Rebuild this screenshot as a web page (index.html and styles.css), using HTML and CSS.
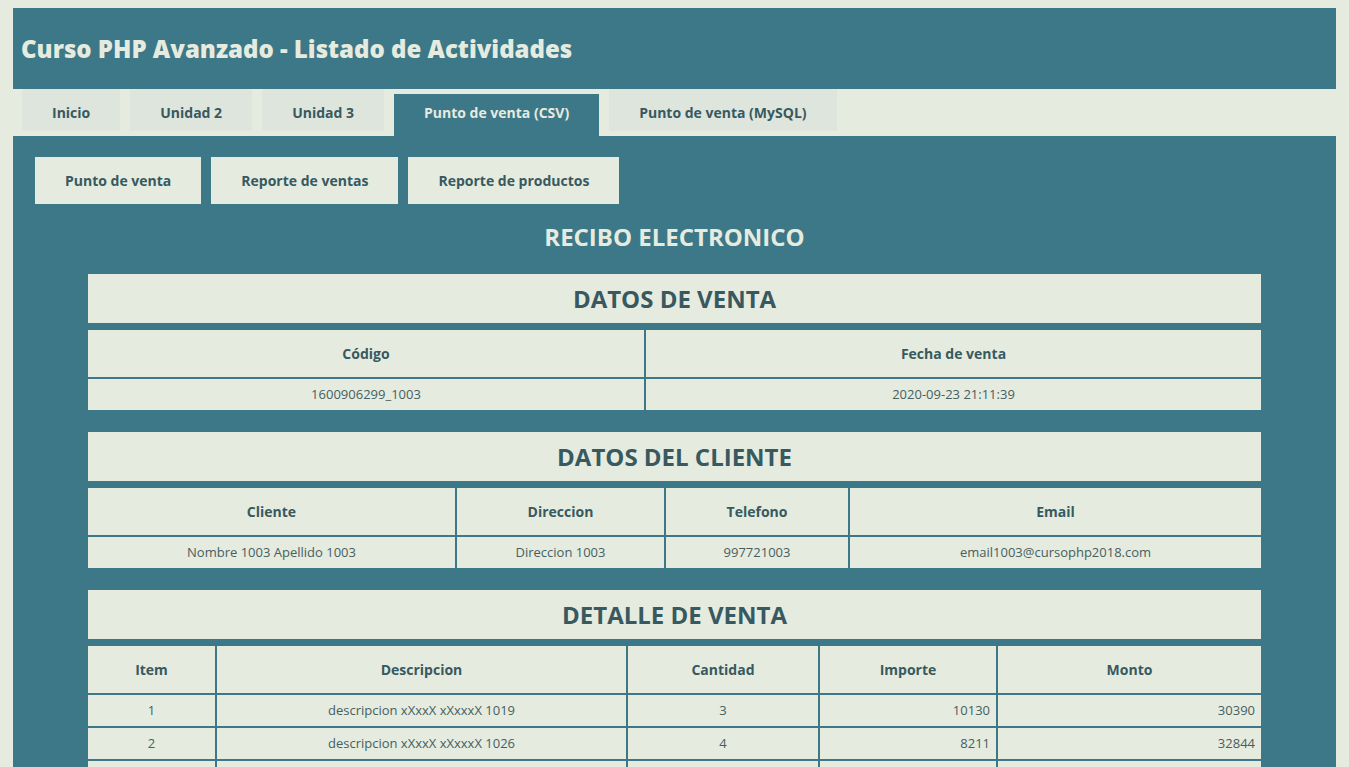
FILE: index.html
```html
<!DOCTYPE html>
<html lang="es">
<head>
    <meta charset="UTF-8">
    <meta name="viewport" content="width=device-width, initial-scale=1.0">
    <title>Curso PHP Avanzado - Recibo electronico</title>
    <link rel="stylesheet" href="styles.css">
</head>
<body>
    <header class="site-header">
        <h1>Curso PHP Avanzado - Listado de Actividades</h1>
    </header>

    <nav class="tabs">
        <a class="tab" href="#">Inicio</a>
        <a class="tab" href="#">Unidad 2</a>
        <a class="tab" href="#">Unidad 3</a>
        <a class="tab active" href="#">Punto de venta (CSV)</a>
        <a class="tab" href="#">Punto de venta (MySQL)</a>
    </nav>

    <main class="content">
        <div class="subnav">
            <a class="subbtn" href="#">Punto de venta</a>
            <a class="subbtn" href="#">Reporte de ventas</a>
            <a class="subbtn" href="#">Reporte de productos</a>
        </div>

        <h2 class="receipt-title">RECIBO ELECTRONICO</h2>

        <section class="block">
            <h3 class="block-title">DATOS DE VENTA</h3>
            <table class="grid">
                <tr>
                    <th class="c-codigo">Código</th>
                    <th>Fecha de venta</th>
                </tr>
                <tr>
                    <td>1600906299_1003</td>
                    <td>2020-09-23 21:11:39</td>
                </tr>
            </table>
        </section>

        <section class="block">
            <h3 class="block-title">DATOS DEL CLIENTE</h3>
            <table class="grid">
                <tr>
                    <th class="c-cliente">Cliente</th>
                    <th class="c-direccion">Direccion</th>
                    <th class="c-telefono">Telefono</th>
                    <th>Email</th>
                </tr>
                <tr>
                    <td>Nombre 1003 Apellido 1003</td>
                    <td>Direccion 1003</td>
                    <td>997721003</td>
                    <td>email1003@cursophp2018.com</td>
                </tr>
            </table>
        </section>

        <section class="block">
            <h3 class="block-title">DETALLE DE VENTA</h3>
            <table class="grid">
                <tr>
                    <th class="c-item">Item</th>
                    <th class="c-desc">Descripcion</th>
                    <th class="c-cant">Cantidad</th>
                    <th class="c-importe">Importe</th>
                    <th>Monto</th>
                </tr>
                <tr>
                    <td>1</td>
                    <td>descripcion xXxxX xXxxxX 1019</td>
                    <td>3</td>
                    <td class="num">10130</td>
                    <td class="num">30390</td>
                </tr>
                <tr>
                    <td>2</td>
                    <td>descripcion xXxxX xXxxxX 1026</td>
                    <td>4</td>
                    <td class="num">8211</td>
                    <td class="num">32844</td>
                </tr>
                <tr>
                    <td>3</td>
                    <td>descripcion xXxxX xXxxxX 1041</td>
                    <td>2</td>
                    <td class="num">5470</td>
                    <td class="num">10940</td>
                </tr>
                <tr>
                    <td colspan="4" class="num total">Total</td>
                    <td class="num">74174</td>
                </tr>
            </table>
        </section>
    </main>
</body>
</html>
```

FILE: styles.css
```css
body {
    margin: 8px 13px;
    background-color: #e6ebdf;
    font-family: "Open Sans", Arial, sans-serif;
    color: #37595f;
}
a {
    text-decoration: none;
    color: inherit;
}
.site-header {
    background-color: #3d7888;
    height: 81px;
    display: flex;
    align-items: center;
    padding: 0 8px;
}
.site-header h1 {
    margin: 0;
    font-size: 24px;
    font-weight: 800;
    color: #e6ebdf;
}
.tabs {
    display: flex;
    align-items: flex-start;
    gap: 10px;
    padding-left: 9px;
    height: 47px;
}
.tab {
    display: block;
    background-color: #dee5dc;
    font-size: 14px;
    font-weight: 700;
    line-height: 17px;
    padding: 15px 30px 10px;
}
.tab.active {
    background-color: #3d7888;
    color: #e6ebdf;
    margin-top: 5px;
    padding: 10px 30px 15px;
}
.content {
    background-color: #3d7888;
    padding: 21px 22px 40px;
}
.subnav {
    display: flex;
    gap: 10px;
}
.subbtn {
    display: block;
    background-color: #e6ebdf;
    font-size: 14px;
    font-weight: 700;
    line-height: 17px;
    padding: 15px 30px;
}
.receipt-title {
    margin: 16px 0 21px;
    text-align: center;
    font-size: 24px;
    line-height: 33px;
    color: #e6ebdf;
}
.block {
    width: 1173px;
    margin: 0 auto 22px;
}
.block-title {
    margin: 0 0 7px;
    background-color: #e6ebdf;
    text-align: center;
    font-size: 24px;
    line-height: 49px;
}
.grid {
    width: 100%;
    border-collapse: collapse;
    border-style: hidden;
    table-layout: fixed;
    background-color: #e6ebdf;
}
.grid th,
.grid td {
    box-sizing: border-box;
    border: 2px solid #3d7888;
    text-align: center;
    line-height: 17px;
}
.grid th {
    font-size: 14px;
    font-weight: 700;
    padding: 15px 6px;
}
.grid td {
    font-size: 13px;
    color: #45605f;
    padding: 7px 6px;
}
.grid td.num {
    text-align: right;
}
.grid td.total {
    font-weight: 700;
}
.c-codigo { width: 557px; }
.c-cliente { width: 368px; }
.c-direccion { width: 209px; }
.c-telefono { width: 184px; }
.c-item { width: 128px; }
.c-desc { width: 411px; }
.c-cant { width: 192px; }
.c-importe { width: 178px; }
```
